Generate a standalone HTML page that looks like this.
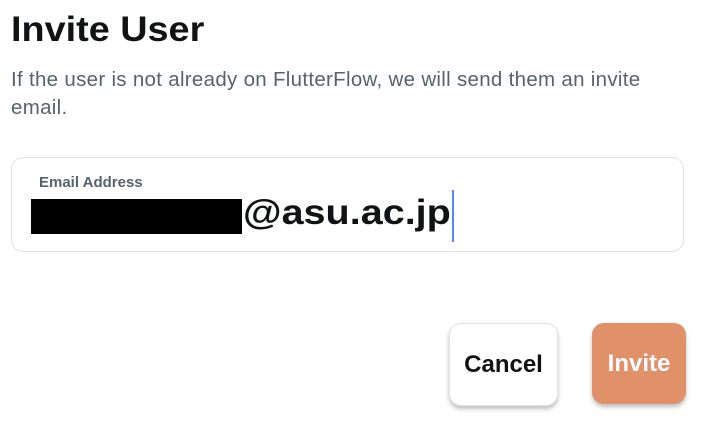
<!DOCTYPE html>
<html><head><style>
body{margin:0;width:702px;height:422px;background:#fff;font-family:"Liberation Sans",sans-serif;position:relative;overflow:hidden}
.t{position:absolute;left:11px;top:10px;font-size:35px;font-weight:bold;color:#101213;transform:scaleX(1.08);transform-origin:left}
.s{position:absolute;left:11px;top:66px;width:670px;font-size:20.5px;line-height:28px;color:#57636c;letter-spacing:0.3px}
.f{position:absolute;left:11px;top:157px;width:673px;height:95px;border:1.5px solid #e0e3e7;border-radius:12px;box-sizing:border-box}
.l{position:absolute;left:39px;top:174px;font-size:15px;font-weight:bold;color:#57636c}
.b{position:absolute;left:31px;top:199px;width:211px;height:35px;background:#000}
.e{position:absolute;left:243px;top:193px;font-size:35px;font-weight:bold;color:#101213;transform:scaleX(1.13);transform-origin:left}
.c{position:absolute;left:452px;top:190px;width:2px;height:52px;background:#4b8cf5}
.btn{position:absolute;top:323px;height:81px;border-radius:12px;font-size:24px;font-weight:bold;display:flex;align-items:center;justify-content:center;box-shadow:0 3px 4px rgba(0,0,0,.25)}
</style></head><body>
<div class="t">Invite User</div>
<div class="s">If the user is not already on FlutterFlow, we will send them an invite email.</div>
<div class="f"></div>
<div class="l">Email Address</div>
<div class="b"></div>
<div class="e">@asu.ac.jp</div>
<div class="c"></div>
<div class="btn" style="left:449px;width:107px;background:#fff;border:1px solid #e0e3e7;color:#101213">Cancel</div>
<div class="btn" style="left:592px;width:94px;background:#e0916a;color:#fff">Invite</div>
</body></html>
